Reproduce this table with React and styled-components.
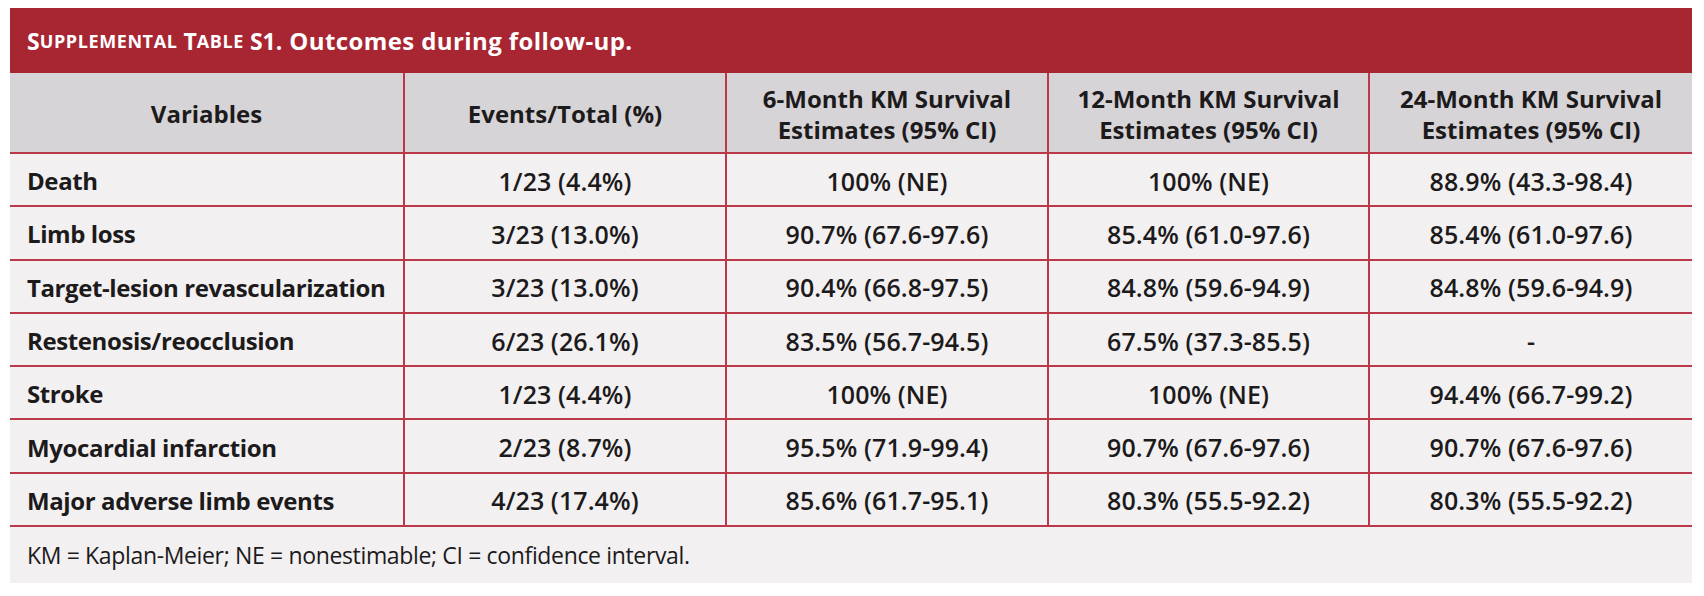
import React from 'react';
import styled, {createGlobalStyle} from "styled-components";

const GlobalStyle = createGlobalStyle`
  body {
    margin: 0;
    background: #ffffff;
    font-family: "Open Sans", "Noto Sans", sans-serif;
    color: #1c1a1b;
  }
`

const columns = [
    "6-Month KM Survival Estimates (95% CI)",
    "12-Month KM Survival Estimates (95% CI)",
    "24-Month KM Survival Estimates (95% CI)",
]

const rows = [
    ["Death", "1/23 (4.4%)", "100% (NE)", "100% (NE)", "88.9% (43.3-98.4)"],
    ["Limb loss", "3/23 (13.0%)", "90.7% (67.6-97.6)", "85.4% (61.0-97.6)", "85.4% (61.0-97.6)"],
    ["Target-lesion revascularization", "3/23 (13.0%)", "90.4% (66.8-97.5)", "84.8% (59.6-94.9)", "84.8% (59.6-94.9)"],
    ["Restenosis/reocclusion", "6/23 (26.1%)", "83.5% (56.7-94.5)", "67.5% (37.3-85.5)", "-"],
    ["Stroke", "1/23 (4.4%)", "100% (NE)", "100% (NE)", "94.4% (66.7-99.2)"],
    ["Myocardial infarction", "2/23 (8.7%)", "95.5% (71.9-99.4)", "90.7% (67.6-97.6)", "90.7% (67.6-97.6)"],
    ["Major adverse limb events", "4/23 (17.4%)", "85.6% (61.7-95.1)", "80.3% (55.5-92.2)", "80.3% (55.5-92.2)"],
]

function App() {
    return (
        <Page>
            <GlobalStyle/>
            <TableCard>
                <TitleBar>
                    S<SmallCap>upplemental</SmallCap> T<SmallCap>able</SmallCap> S1.
                    <TitleRest>Outcomes during follow-up.</TitleRest>
                </TitleBar>
                <Grid>
                    <HeadCell>Variables</HeadCell>
                    <HeadCell>Events/Total (%)</HeadCell>
                    {columns.map((col, index) => (
                        <HeadCell key={col} $last={index === columns.length - 1}>
                            {col.replace(" Estimates", "\nEstimates")}
                        </HeadCell>
                    ))}
                    {rows.map(row => row.map((value, index) => (
                        <BodyCell key={row[0] + index}
                                  $label={index === 0}
                                  $last={index === row.length - 1}>
                            {value}
                        </BodyCell>
                    )))}
                </Grid>
                <Footnote>KM = Kaplan-Meier; NE = nonestimable; CI = confidence interval.</Footnote>
            </TableCard>
        </Page>
    );
}

const Page = styled.div`
  padding: 8px 12px 13px 10px;
`

const TableCard = styled.div`
  width: 1682px;
  background-color: #f2f0f1;
  display: flex;
  flex-direction: column;
`

const TitleBar = styled.div`
  height: 65px;
  background-color: #a82532;
  color: #ffffff;
  display: flex;
  align-items: center;
  white-space: pre;
  padding-left: 17px;
  font-size: 23px;
  font-weight: 700;
`

const SmallCap = styled.span`
  text-transform: uppercase;
  font-size: 18px;
  letter-spacing: 0.6px;
`

const TitleRest = styled.span`
  margin-left: 7px;
  font-size: 24px;
  letter-spacing: 0.4px;
`

const Grid = styled.div`
  display: grid;
  grid-template-columns: 395px 322px 322px 321px 1fr;
  grid-template-rows: 81px repeat(7, 53.3px);
`

const Cell = styled.div`
  display: flex;
  align-items: center;
  border-bottom: 2px solid #b9384a;
  border-right: ${props => props.$last ? "none" : "2px solid #b9384a"};
  font-size: 24px;
`

const HeadCell = styled(Cell)`
  background-color: #d6d4d7;
  justify-content: center;
  text-align: center;
  white-space: pre-line;
  line-height: 31px;
  font-weight: 700;
  padding-top: 2px;
`

const BodyCell = styled(Cell)`
  justify-content: ${props => props.$label ? "flex-start" : "center"};
  padding-left: ${props => props.$label ? "17px" : "0"};
  font-size: ${props => props.$label ? "24px" : "25px"};
  font-weight: ${props => props.$label ? 700 : 600};
  letter-spacing: ${props => props.$label ? "-0.4px" : "0.1px"};
  padding-top: 2px;
`

const Footnote = styled.div`
  height: 56px;
  display: flex;
  align-items: center;
  padding-left: 17px;
  font-size: 23px;
  letter-spacing: -0.35px;
`

export default App;
